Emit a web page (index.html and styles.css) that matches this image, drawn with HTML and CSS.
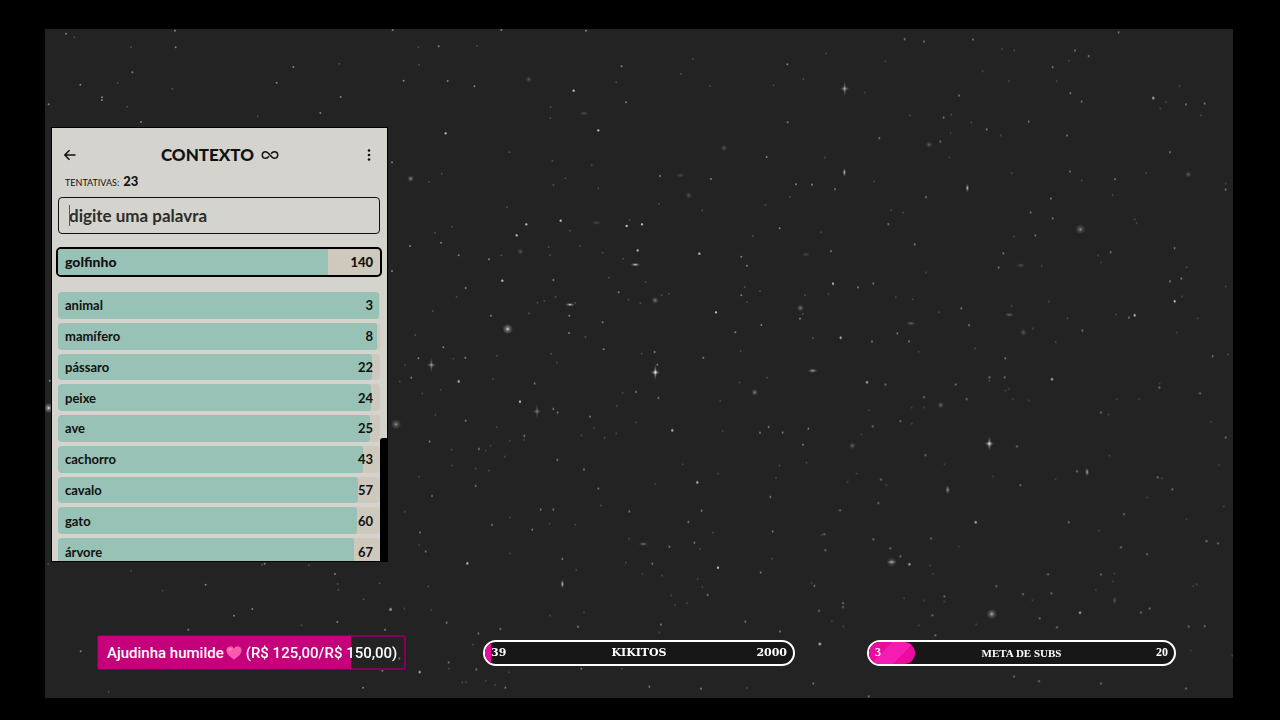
FILE: index.html
```html
<!DOCTYPE html>
<html lang="pt-BR">
<head>
<meta charset="utf-8">
<meta name="viewport" content="width=device-width, initial-scale=1">
<title>Contexto</title>
<link rel="stylesheet" href="styles.css">
</head>
<body>
<div class="scene">
  <svg class="sky" viewBox="135 87 3564 2007" preserveAspectRatio="xMidYMid slice" aria-hidden="true">
    <defs>
      <radialGradient id="glow"><stop offset="0" stop-color="#fff" stop-opacity=".95"/><stop offset=".3" stop-color="#ccc" stop-opacity=".5"/><stop offset="1" stop-color="#999" stop-opacity="0"/></radialGradient>
      <g id="halo"><circle r="16" fill="url(#glow)"/></g>
      <g id="soft"><circle r="11" fill="url(#glow)"/></g>
      <g id="spark"><ellipse rx="16" ry="5" fill="url(#glow)"/><ellipse rx="5" ry="24" fill="url(#glow)"/><circle r="9" fill="url(#glow)"/></g>
      <g id="flat"><ellipse rx="15" ry="6" fill="url(#glow)"/></g>
      <g id="tall"><ellipse rx="6" ry="13" fill="url(#glow)"/></g>
    </defs>
    <g transform="translate(1170 60)">
      <path class="dim" d="M85 81h0M261 78h0M87 135h0M909 117h0M873 162h0M960 198h0M1240 177h0M1151 196h0M482 261h0M481 294h0M679 187h0M358 397h0M487 423h0M605 436h0M155 461h0M117 486h0M526 475h0M490 495h0M625 505h0M351 561h0M186 620h0M135 639h0M540 632h0M476 681h0M480 706h0M334 706h0M570 678h0M638 698h0M699 716h0M719 600h0M807 551h0M937 571h0M1126 555h0M1200 531h0M1088 648h0M1064 801h0M1110 814h0M1071 847h0M1245 825h0M657 773h0M767 786h0M837 821h0M751 849h0M715 839h0M463 843h0M442 848h0M417 880h0M586 951h0M484 1001h0M321 1007h0M76 945h0M128 873h0M200 830h0M497 831h0M556 848h0M815 825h0M1052 993h0M1269 954h0M1266 494h0M1238 882h0M755 1001h0"/>
      <path class="mid" d="M8 30h0M334 30h0M588 32h0M146 79h0M41 182h0M173 183h0M253 199h0M695 139h0M708 247h0M1192 133h0M1193 307h0M6 427h0M1130 411h0M810 468h0M963 477h0M1218 493h0M1169 625h0M1054 710h0M1071 737h0M60 678h0M153 668h0M206 706h0M297 718h0M490 780h0M303 887h0M538 887h0M537 939h0M686 817h0M638 907h0M641 988h0M794 996h0M1036 937h0M1054 826h0M1230 896h0M1114 915h0M6 753h0M160 982h0M226 1013h0M940 1013h0M85 1015h0M227 804h0"/>
      <path class="bright" d="M551 212h0M625 331h0M167 340h0M409 613h0M380 646h0M512 602h0M710 618h0M756 613h0M743 691h0M928 701h0M337 782h0M978 877h0"/>
      <use href="#halo" x="353" y="927"/>
      <g opacity=".6"><use href="#soft" x="62" y="476"/><use href="#soft" x="795" y="841"/><use href="#soft" x="1231" y="864"/></g>
      <g opacity=".35"><use href="#soft" x="1002" y="384"/><use href="#soft" x="896" y="526"/><use href="#soft" x="416" y="178"/><use href="#soft" x="391" y="695"/><use href="#flat" x="582" y="280"/><use href="#flat" x="871" y="466"/><use href="#flat" x="619" y="608"/><use href="#flat" x="1248" y="703"/></g>
      <use href="#flat" x="736" y="734"/><use href="#flat" x="540" y="854"/>
    </g>
    <g transform="translate(2430 60)">
      <path class="dim" d="M48 100h0M226 124h0M576 87h0M613 91h0M777 122h0M740 183h0M597 183h0M518 153h0M164 218h0M300 286h0M424 284h0M484 307h0M573 346h0M422 339h0M418 413h0M45 413h0M192 484h0M243 570h0M279 578h0M605 459h0M815 482h0M908 525h0M1008 459h0M1109 198h0M1068 246h0M1051 266h0M1173 286h0M1247 491h0M974 598h0M980 609h0M864 706h0M873 728h0M695 738h0M612 650h0M348 758h0M257 831h0M308 838h0M55 822h0M387 877h0M605 858h0M717 845h0M772 895h0M669 926h0M918 884h0M1116 830h0M1247 800h0M1163 895h0M1100 938h0M737 966h0M495 985h0M326 995h0M33 637h0M9 954h0M1254 1003h0M1130 742h0"/>
      <path class="mid" d="M284 57h0M342 65h0M489 59h0M926 37h0M795 92h0M836 108h0M728 141h0M447 227h0M401 293h0M530 328h0M656 305h0M781 219h0M815 245h0M771 347h0M208 354h0M391 365h0M1128 253h0M1184 251h0M1080 396h0M780 455h0M915 477h0M723 536h0M728 595h0M662 578h0M676 647h0M580 700h0M566 743h0M314 673h0M235 612h0M348 531h0M75 507h0M6 494h0M63 693h0M144 802h0M190 791h0M454 865h0M477 915h0M262 940h0M186 965h0M297 964h0M902 696h0M1094 684h0M1114 776h0M1080 784h0M957 893h0M817 932h0M1208 1008h0M1247 509h0M586 1015h0"/>
      <path class="bright" d="M1030 234h0M92 953h0M69 791h0M1094 844h0M974 886h0"/>
      <g opacity=".7"><use href="#spark" x="104" y="206"/></g>
      <g opacity=".55"><use href="#halo" x="811" y="628"/><use href="#flat" x="598" y="884"/><use href="#flat" x="303" y="910"/></g>
      <g opacity=".4"><use href="#soft" x="1135" y="463"/><use href="#soft" x="640" y="937"/><use href="#soft" x="357" y="374"/><use href="#flat" x="632" y="736"/></g>
      <use href="#tall" x="103" y="457"/><use href="#tall" x="472" y="504"/>
    </g>
    <g transform="translate(1170 1050)">
      <path class="dim" d="M45 45h0M190 26h0M501 37h0M309 87h0M29 94h0M97 130h0M152 120h0M136 195h0M320 231h0M359 273h0M302 287h0M287 302h0M185 299h0M186 346h0M257 356h0M297 362h0M87 380h0M345 320h0M403 270h0M574 256h0M644 264h0M679 250h0M738 217h0M612 234h0M681 168h0M698 129h0M1049 97h0M1131 83h0M991 153h0M998 243h0M984 371h0M878 343h0M796 402h0M1168 346h0M1158 384h0M1250 338h0M633 466h0M556 524h0M479 521h0M360 503h0M87 585h0M44 485h0M360 610h0M559 660h0M707 638h0M717 566h0M969 548h0M930 597h0M923 687h0M937 711h0M844 736h0M855 765h0M891 759h0M816 676h0M757 672h0M480 796h0M582 787h0M115 709h0M43 776h0M124 780h0M249 883h0M287 993h0M315 1005h0M357 967h0M217 997h0M228 996h0M177 955h0M1071 1014h0M696 956h0M808 848h0M1146 626h0M1265 699h0"/>
      <path class="mid" d="M64 83h0M119 274h0M227 212h0M434 100h0M490 177h0M503 187h0M600 200h0M403 258h0M267 297h0M257 408h0M126 438h0M306 525h0M452 478h0M490 478h0M427 539h0M502 330h0M582 358h0M625 415h0M718 484h0M738 126h0M805 144h0M802 44h0M1110 248h0M1178 247h0M1136 231h0M1255 236h0M1239 284h0M1141 441h0M1148 544h0M1112 667h0M935 482h0M895 516h0M913 578h0M838 590h0M787 641h0M953 735h0M90 547h0M107 604h0M517 627h0M170 818h0M265 850h0M331 837h0M564 830h0M813 823h0M1066 815h0M1170 844h0M1273 708h0M176 937h0M259 958h0M346 1013h0M574 956h0M778 1010h0M933 1016h0M1270 1000h0M1288 882h0M1287 782h0M28 925h0"/>
      <path class="bright" d="M206 94h0M390 155h0M847 241h0M922 397h0M232 640h0M984 653h0M89 966h0M2 778h0"/>
      <use href="#spark" x="796" y="67"/><use href="#tall" x="517" y="702"/><use href="#flat" x="1268" y="62"/>
      <g opacity=".6"><use href="#halo" x="18" y="223"/><use href="#spark" x="124" y="45"/><use href="#soft" x="1094" y="127"/><use href="#flat" x="760" y="582"/></g>
      <g opacity=".45"><use href="#spark" x="441" y="184"/></g>
    </g>
    <g transform="translate(2430 1050)">
      <path class="dim" d="M177 180h0M304 172h0M305 221h0M154 253h0M342 172h0M140 371h0M112 396h0M229 405h0M404 344h0M549 379h0M736 387h0M538 92h0M586 122h0M597 117h0M609 147h0M656 152h0M920 147h0M987 147h0M1048 100h0M895 194h0M898 317h0M1011 443h0M1056 385h0M1129 507h0M1203 216h0M1226 345h0M867 542h0M446 590h0M360 647h0M369 672h0M282 745h0M342 752h0M403 755h0M326 826h0M499 824h0M668 752h0M857 720h0M909 694h0M913 671h0M1149 708h0M1160 703h0M1241 469h0M1142 902h0M1267 917h0M26 783h0M65 813h0M36 555h0M100 830h0M1188 573h0M429 912h0"/>
      <path class="mid" d="M226 104h0M342 141h0M437 104h0M470 147h0M538 82h0M584 82h0M188 229h0M271 213h0M346 315h0M213 389h0M205 459h0M90 481h0M190 568h0M241 595h0M271 619h0M43 552h0M46 600h0M363 566h0M621 290h0M631 405h0M801 364h0M873 188h0M1048 113h0M1170 130h0M1247 263h0M1043 382h0M1087 418h0M942 492h0M776 517h0M933 592h0M1011 612h0M1190 573h0M1224 580h0M873 674h0M714 673h0M559 708h0M639 732h0M724 730h0M403 739h0M367 796h0M376 856h0M689 805h0M741 832h0M99 759h0M99 771h0M993 788h0M1019 776h0M1136 830h0M1184 828h0M612 980h0M687 993h0M873 1001h0M1128 1016h0M176 1039h0"/>
      <path class="bright" d="M171 97h0M726 88h0M497 517h0M298 643h0M810 788h0M30 882h0"/>
      <use href="#spark" x="538" y="281"/><use href="#tall" x="413" y="419"/><use href="#tall" x="831" y="366"/>
      <g opacity=".8"><use href="#flat" x="245" y="636"/><use href="#halo" x="545" y="792"/></g>
      <g opacity=".45"><use href="#soft" x="127" y="287"/><use href="#halo" x="245" y="636"/><use href="#soft" x="392" y="165"/><use href="#tall" x="914" y="751"/></g>
    </g>
    <g transform="translate(90 60)">
      <path class="dim" d="M133 52h0M303 81h0M263 189h0M427 206h0M291 260h0M683 289h0M928 131h0"/>
      <path class="mid" d="M108 41h0M435 32h0M437 82h0M307 157h0M151 194h0M216 232h0M216 240h0M333 306h0M740 188h0M790 141h0M871 279h0M932 231h0M56 253h0"/>
    </g>
    <g transform="translate(90 1680)">
      <path class="dim" d="M55 13h0M303 33h0M398 92h0M814 196h0M837 16h0M923 72h0M925 89h0M1049 70h0M1001 118h0M236 395h0M696 14h0"/>
      <path class="mid" d="M527 74h0M612 167h0M667 147h0M475 209h0M152 274h0M704 11h0M915 42h0M922 186h0M1080 149h0M1065 209h0M1057 332h0M999 383h0"/>
    </g>
    <use href="#halo" x="146" y="1224"/>
    <path class="mid" d="M149 1142h0"/>
  </svg>

  <main class="game">
    <header class="game-header">
      <button class="icon-button" type="button" aria-label="Voltar">
        <svg width="12" height="12" viewBox="0 0 12 12"><path d="M11.500 6H1M5.500 1.200 .800 6l4.700 4.800"/></svg>
      </button>
      <h1 class="game-title">CONTEXTO
        <svg width="18" height="10" viewBox="0 0 18 10" aria-hidden="true"><path d="M8 6.300C6.800 7.800 5.900 8.300 4.600 8.300a3.300 3.300 0 0 1 0-6.600C8 1.700 10 8.300 13.400 8.300a3.300 3.300 0 0 0 0-6.600c-1.300 0-2.200.5-3.400 2"/></svg>
      </h1>
      <button class="icon-button menu" type="button" aria-label="Menu">
        <svg class="dots" width="4" height="12" viewBox="0 0 4 12"><circle cx="2" cy="1.500" r="1.300"/><circle cx="2" cy="6" r="1.300"/><circle cx="2" cy="10.500" r="1.300"/></svg>
      </button>
    </header>
    <p class="attempts"><span>TENTATIVAS:</span> <b>23</b></p>
    <div class="entry">
      <input class="guess" type="text" placeholder="digite uma palavra" aria-label="digite uma palavra">
      <span class="caret"></span>
    </div>
    <div class="row last"><span class="fill" style="width:84%"></span><span class="word">golfinho</span><span class="rank">140</span></div>
    <div class="rows">
      <div class="row"><span class="fill" style="width:99.700%"></span><span class="word">animal</span><span class="rank">3</span></div>
      <div class="row"><span class="fill" style="width:99%"></span><span class="word">mamífero</span><span class="rank">8</span></div>
      <div class="row"><span class="fill" style="width:97.400%"></span><span class="word">pássaro</span><span class="rank">22</span></div>
      <div class="row"><span class="fill" style="width:97.200%"></span><span class="word">peixe</span><span class="rank">24</span></div>
      <div class="row"><span class="fill" style="width:97%"></span><span class="word">ave</span><span class="rank">25</span></div>
      <div class="row"><span class="fill" style="width:94.800%"></span><span class="word">cachorro</span><span class="rank">43</span></div>
      <div class="row"><span class="fill" style="width:93.200%"></span><span class="word">cavalo</span><span class="rank">57</span></div>
      <div class="row"><span class="fill" style="width:92.800%"></span><span class="word">gato</span><span class="rank">60</span></div>
      <div class="row"><span class="fill" style="width:92%"></span><span class="word">árvore</span><span class="rank">67</span></div>
    </div>
    <div class="thumb"></div>
  </main>

  <footer class="goals">
    <div class="tip">
      <span class="tip-fill" style="width:83%"></span>
      <span class="tip-text">Ajudinha humilde<svg width="16" height="14" viewBox="0 0 16 14" aria-hidden="true"><path fill="#f95bab" d="M8 13.500C3.500 10.500.5 7.600.5 4.400A3.900 3.900 0 0 1 8 2.800a3.900 3.900 0 0 1 7.500 1.600c0 3.200-3 6.100-7.500 9.100z"/><path fill="#ff86c3" d="M3 2.500c1-.8 2.700-.5 3 .4S4.500 4.300 3.500 5 1.900 3.400 3 2.500z"/></svg>(R$ 125,00/R$ 150,00)</span>
    </div>
    <div class="goal followers">
      <span class="goal-fill" style="width:2%"></span>
      <span class="now">39</span><span>KIKITOS</span><span class="target">2000</span>
    </div>
    <div class="goal subs">
      <span class="goal-fill" style="width:15%"></span>
      <span class="now">3</span><span>META DE SUBS</span><span class="target">20</span>
    </div>
  </footer>
</div>
</body>
</html>
```
FILE: styles.css
```css
* { box-sizing: border-box; }

body {
  margin: 0;
  min-height: 100vh;
  padding: 29px 47px 22px 45px;
  display: flex;
  background: #000;
  font-family: Lato, "Open Sans", sans-serif;
}

.scene {
  position: relative;
  flex: 1;
  display: flex;
  flex-direction: column;
  justify-content: space-between;
  align-items: flex-start;
  padding: 98px 57px 28px 6px;
  background: #232323;
}

.sky {
  position: absolute;
  inset: 0;
  width: 100%;
  height: 100%;
}

.sky path { fill: none; stroke-linecap: round; }
.dim { stroke: #4c4c4c; stroke-width: 6; }
.mid { stroke: #808080; stroke-width: 6; }
.bright { stroke: #c0c0c0; stroke-width: 7; }

.game {
  position: relative;
  width: 337px;
  height: 435px;
  overflow: hidden;
  padding: 14px 7px 0 6px;
  border: 1px solid #000;
  background: #d4d3cd;
  color: #111;
}

.game-header {
  display: grid;
  grid-template-columns: 24px 1fr 22px;
  align-items: center;
  height: 26px;
}

.icon-button {
  display: flex;
  padding: 0 6px;
  border: 0;
  background: none;
}

.icon-button svg,
.game-title svg { fill: none; stroke: #111; stroke-width: 1.500; flex: none; }
.icon-button .dots { fill: #111; stroke: none; }
.menu { justify-content: center; }

.game-title {
  display: flex;
  justify-content: center;
  align-items: center;
  gap: 7px;
  margin: 0;
  font-size: 17px;
  font-weight: 900;
  line-height: 24px;
}

.attempts {
  display: flex;
  align-items: baseline;
  gap: 4px;
  margin: 4px 0 5px 7px;
  font-size: 13px;
  line-height: 18px;
}

.attempts span { font-size: 9px; }
.attempts b { font-weight: 900; }

.entry { position: relative; }

.guess {
  display: block;
  width: 100%;
  height: 37px;
  padding: 0 10px;
  border: 1px solid #111;
  border-radius: 4px;
  background: transparent;
  font: bold 17px Lato, "Open Sans", sans-serif;
  color: #222;
}

.guess::placeholder { color: #2c2c2a; opacity: 1; }

.caret {
  position: absolute;
  left: 11px;
  top: 8px;
  width: 1px;
  height: 21px;
  background: #555;
}

.row {
  position: relative;
  display: flex;
  justify-content: space-between;
  align-items: center;
  padding: 0 7px;
  border-radius: 4px;
  overflow: hidden;
  background: #cfc8bd;
  font-size: 13px;
  font-weight: 700;
  line-height: 18px;
}

.fill {
  position: absolute;
  left: 0;
  top: 0;
  bottom: 0;
  border-radius: 3px;
  background: #98c2b5;
}

.word, .rank { position: relative; }

.last {
  height: 30px;
  margin: 13px -2px 15px;
  border: 2px solid #000;
  border-radius: 5px;
  font-weight: 900;
}

.last .fill { border-radius: 0; }
.last .word { font-size: 14px; }

.rows {
  display: grid;
  grid-auto-rows: 1fr;
  gap: 4px;
  height: 273px;
}

.thumb {
  position: absolute;
  right: 0;
  bottom: 0;
  width: 7px;
  height: 123px;
  border-top-left-radius: 3px;
  background: #000;
}

.goals {
  position: relative;
  align-self: stretch;
  display: grid;
  grid-template-columns: minmax(0, 309fr) 77fr 312fr 72fr 309fr;
  align-items: center;
  padding-left: 46px;
  color: #fff;
}

.tip {
  position: relative;
  height: 35px;
  display: flex;
  align-items: center;
  padding: 0 8px;
  border: 2px solid #850056;
  border-radius: 3px;
}

.tip-fill {
  position: absolute;
  left: -1px;
  top: -1px;
  bottom: -1px;
  background: #c4007b;
}

.tip-text {
  position: relative;
  display: flex;
  align-items: center;
  white-space: nowrap;
  font: 500 15px Roboto, sans-serif;
}

.tip-text svg { margin: 0 4px 0 2px; }

.goal {
  position: relative;
  overflow: hidden;
  height: 26px;
  display: grid;
  grid-template-columns: 1fr auto 1fr;
  align-items: center;
  padding: 0 6px;
  border: 2px solid #fff;
  border-radius: 13px;
  background: #171717;
  font: bold 11px "Liberation Serif", serif;
}

.goal span { position: relative; }
.goal .now, .goal .target { font-size: 12px; }
.goal .target { text-align: right; }

.goal .goal-fill {
  position: absolute;
  left: 0;
  top: 0;
  bottom: 0;
  background: #ec0aa0;
}

.followers {
  grid-column: 3;
  font: bold 11px Georgia, "DejaVu Serif", serif;
}

.followers .now, .followers .target { font-size: 11px; }

.subs { grid-column: 5; }

.subs .goal-fill {
  border-radius: 0 11px 11px 0;
  background: linear-gradient(135deg, #ec0aa0 34%, #f41cb2 34% 67%, #ec0aa0 67%);
}
```
